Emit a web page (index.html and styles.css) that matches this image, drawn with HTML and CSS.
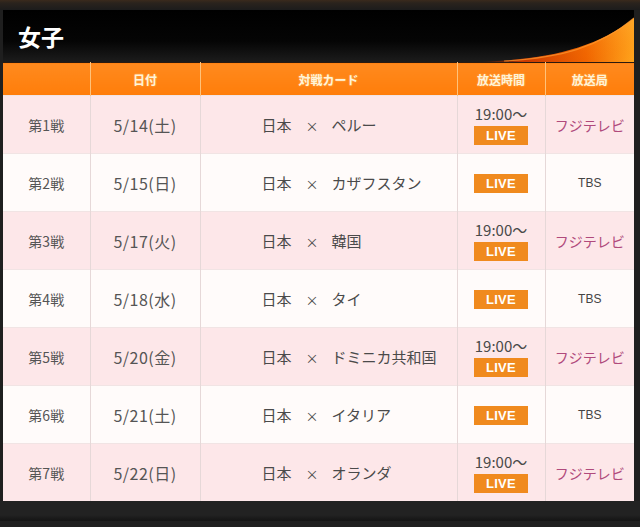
FILE: index.html
```html
<!DOCTYPE html>
<html lang="ja">
<head>
<meta charset="utf-8">
<link rel="stylesheet" href="styles.css">
</head>
<body>
<div class="topline"></div>
<div class="panel">
  <div class="titlebar">
    <h1 class="title">女子</h1>
    <svg class="swoosh" width="160" height="52" viewBox="0 0 160 52" aria-hidden="true">
      <defs>
        <linearGradient id="sg" x1="0" y1="0" x2="1" y2="0">
          <stop offset="0" stop-color="#6a1800" stop-opacity="0"/>
          <stop offset="0.3" stop-color="#c83800"/>
          <stop offset="0.7" stop-color="#f06400"/>
          <stop offset="1" stop-color="#ffa41c"/>
        </linearGradient>
        <linearGradient id="sv" x1="0" y1="0" x2="0" y2="1">
          <stop offset="0" stop-color="#ffb040" stop-opacity="0.35"/>
          <stop offset="1" stop-color="#ff7a00" stop-opacity="0"/>
        </linearGradient>
      </defs>
      <path d="M0,52 C70,50 120,40 160,8 L160,52 Z" fill="url(#sg)"/>
      <path d="M0,52 C70,50 120,40 160,8 L160,52 Z" fill="url(#sv)"/>
      <path d="M30,51 C85,48 125,38 160,8" fill="none" stroke="#ff9a30" stroke-width="1.2" opacity="0.7"/>
    </svg>
  </div>
  <table class="schedule">
    <colgroup>
      <col class="c1"><col class="c2"><col class="c3"><col class="c4"><col class="c5">
    </colgroup>
    <thead>
      <tr><th></th><th>日付</th><th>対戦カード</th><th>放送時間</th><th>放送局</th></tr>
    </thead>
    <tbody>
      <tr class="pink">
        <td>第1戦</td><td class="date">5/14(土)</td>
        <td class="match"><span>日本</span><span class="x">×</span><span>ペルー</span></td>
        <td class="time"><div>19:00〜</div><span class="live">LIVE</span></td>
        <td class="fuji">フジテレビ</td>
      </tr>
      <tr class="white">
        <td>第2戦</td><td class="date">5/15(日)</td>
        <td class="match"><span>日本</span><span class="x">×</span><span>カザフスタン</span></td>
        <td class="time"><span class="live">LIVE</span></td>
        <td class="tbs">TBS</td>
      </tr>
      <tr class="pink">
        <td>第3戦</td><td class="date">5/17(火)</td>
        <td class="match"><span>日本</span><span class="x">×</span><span>韓国</span></td>
        <td class="time"><div>19:00〜</div><span class="live">LIVE</span></td>
        <td class="fuji">フジテレビ</td>
      </tr>
      <tr class="white">
        <td>第4戦</td><td class="date">5/18(水)</td>
        <td class="match"><span>日本</span><span class="x">×</span><span>タイ</span></td>
        <td class="time"><span class="live">LIVE</span></td>
        <td class="tbs">TBS</td>
      </tr>
      <tr class="pink">
        <td>第5戦</td><td class="date">5/20(金)</td>
        <td class="match"><span>日本</span><span class="x">×</span><span>ドミニカ共和国</span></td>
        <td class="time"><div>19:00〜</div><span class="live">LIVE</span></td>
        <td class="fuji">フジテレビ</td>
      </tr>
      <tr class="white">
        <td>第6戦</td><td class="date">5/21(土)</td>
        <td class="match"><span>日本</span><span class="x">×</span><span>イタリア</span></td>
        <td class="time"><span class="live">LIVE</span></td>
        <td class="tbs">TBS</td>
      </tr>
      <tr class="pink">
        <td>第7戦</td><td class="date">5/22(日)</td>
        <td class="match"><span>日本</span><span class="x">×</span><span>オランダ</span></td>
        <td class="time"><div>19:00〜</div><span class="live">LIVE</span></td>
        <td class="fuji">フジテレビ</td>
      </tr>
    </tbody>
  </table>
</div>
<div class="bottomline"></div>
</body>
</html>
```

FILE: styles.css
```css
html, body {
  margin: 0;
  padding: 0;
}
body {
  width: 640px;
  height: 527px;
  overflow: hidden;
  background: #1f1f1f;
  font-family: "Noto Sans CJK JP", "Noto Sans", sans-serif;
}
.topline {
  height: 10px;
  background: linear-gradient(#3a2a1c 0, #2a231d 3px, #1c1c1c 10px);
}
.panel {
  margin-left: 3px;
  width: 631px;
}
.titlebar {
  position: relative;
  height: 52px;
  background: linear-gradient(#000 0, #050505 60%, #1c1c1c 100%);
  display: flex;
  align-items: center;
  overflow: hidden;
}
.title {
  margin: 0 0 0 15px;
  color: #fff;
  font-size: 23px;
  font-weight: 700;
  line-height: 1;
  position: relative;
  z-index: 1;
}
.swoosh {
  position: absolute;
  right: 0;
  bottom: 0;
}
.schedule {
  width: 631px;
  border-collapse: collapse;
  table-layout: fixed;
  border-top: 1px solid #2a1a10;
}
.c1 { width: 87px; }
.c2 { width: 110px; }
.c3 { width: 257px; }
.c4 { width: 88px; }
.c5 { width: 89px; }
.schedule th {
  height: 32px;
  padding: 0;
  background: linear-gradient(#ff8a1e, #ff7d0a);
  color: #fff4d8;
  font-size: 12px;
  font-weight: 700;
  border-left: 1px solid #ffc27a;
  text-shadow: 0 0 2px rgba(255, 230, 170, 0.6);
}
.schedule th:first-child { border-left: none; }
.schedule td {
  height: 57px;
  padding: 0;
  text-align: center;
  color: #555;
  font-size: 14px;
  border-left: 1px solid #e6d8d8;
  border-top: 1px solid #f1e4e4;
}
.schedule td:first-child { border-left: none; }
.pink td { background: #fde7e9; }
.white td { background: #fffbfa; }
.schedule td.date {
  font-size: 16px;
  letter-spacing: 0.5px;
}
.schedule td.match {
  text-align: left;
  padding-left: 61px;
  font-size: 15px;
  color: #4a4a4a;
}
.x {
  margin: 0 13px 0 14px;
  font-size: 13px;
}
.time div {
  font-size: 15px;
  line-height: 19px;
  color: #4a4a4a;
  margin-bottom: 1px;
}
.live {
  display: inline-block;
  width: 54px;
  height: 19px;
  line-height: 19px;
  background: #f08a1e;
  color: #fff;
  font-family: "Liberation Sans", Arial, sans-serif;
  font-weight: 700;
  font-size: 13px;
  letter-spacing: 0.3px;
}
.schedule td.fuji {
  color: #b04a7c;
  font-size: 14px;
}
.schedule td.tbs {
  color: #444;
  font-size: 12px;
  font-family: "Liberation Sans", Arial, sans-serif;
}
.bottomline {
  height: 20px;
  margin-top: 0;
  background: linear-gradient(#222 0, #222 70%, #141414 100%);
}
```
